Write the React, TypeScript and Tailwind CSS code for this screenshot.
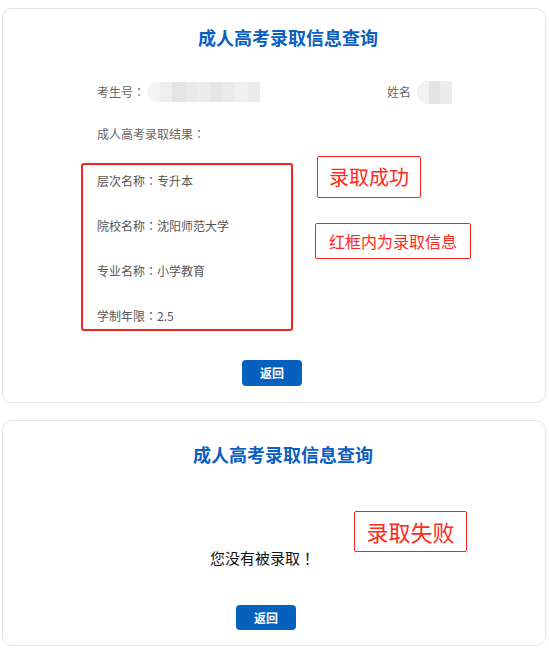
import React from "react";

const font = { fontFamily: '"Noto Sans CJK SC", "Noto Sans", sans-serif' };

// full-width colon sits centred in the JP cut, like the original page font
function Colon() {
  return <span style={{ fontFamily: '"Noto Sans CJK JP", sans-serif' }}>：</span>;
}

// mosaic blur used to hide personal info
function Mosaic({ shades, className }: { shades: string[]; className: string }) {
  return (
    <div className={`flex overflow-hidden rounded-l-full ${className}`}>
      {shades.map((c, i) => (
        <div key={i} className="h-full flex-1" style={{ backgroundColor: c }} />
      ))}
    </div>
  );
}

function BackButton({ className }: { className: string }) {
  return (
    <button
      className={`w-[60px] rounded-[4px] bg-[#0561bd] text-[12px] font-bold text-white ${className}`}
    >
      返回
    </button>
  );
}

export default function App() {
  const rows = [
    ["层次名称", "专升本"],
    ["院校名称", "沈阳师范大学"],
    ["专业名称", "小学教育"],
    ["学制年限", "2.5"],
  ];

  return (
    <div className="min-h-[652px] bg-white pt-[8px]" style={font}>
      {/* success card */}
      <div className="ml-[2px] w-[544px] rounded-[10px] border border-[#e4e4e4] bg-white pb-[16px]">
        <h1 className="mt-[15px] pl-[28px] text-center text-[18px] font-bold leading-[26px] text-[#0b5fc0]">
          成人高考录取信息查询
        </h1>

        <div className="mt-[32px] flex h-[20px] items-center text-[12px] text-[#666]">
          <span className="ml-[94px] w-[50px]">
            考生号<Colon />
          </span>
          <Mosaic
            className="h-[20px] w-[113px]"
            shades={["#f3f3f3", "#eeeeee", "#e4e4e4", "#e9e9e9", "#ececec", "#e6e6e6", "#eaeaea", "#f0f0f0", "#ebebeb"]}
          />
          <span className="ml-[127px] w-[30px]">姓名</span>
          <Mosaic className="h-[23px] w-[35px]" shades={["#f2f2f2", "#e3e3e3", "#ececec"]} />
        </div>

        <p className="ml-[94px] mt-[22px] text-[12px] leading-[20px] text-[#666]">
          成人高考录取结果<Colon />
        </p>

        <div className="mt-[12px] flex items-start">
          <div className="ml-[78px] mt-[7px] flex h-[168px] w-[212px] flex-col gap-[25px] rounded-[3px] border-2 border-[#f5231b] pl-[14px] pt-[6px]">
            {rows.map(([k, v]) => (
              <p key={k} className="text-[12px] leading-[20px] text-[#555]">
                {k}
                <Colon />
                {v}
              </p>
            ))}
          </div>

          <div className="ml-[22px] flex flex-col items-start gap-[25px]">
            <div className="ml-[2px] flex h-[42px] w-[104px] items-center justify-center rounded-[2px] border border-[#f5231b] text-[20px] text-[#ff2a1a]">
              录取成功
            </div>
            <div className="flex h-[36px] w-[156px] items-center justify-center rounded-[2px] border border-[#f5231b] text-[16px] text-[#ff2a1a]">
              红框内为录取信息
            </div>
          </div>
        </div>

        <BackButton className="ml-[239px] mt-[29px] h-[26px]" />
      </div>

      {/* failure card */}
      <div className="relative ml-[2px] mt-[17px] w-[544px] rounded-[10px] border border-[#e4e4e4] bg-white pb-[15px]">
        <h1 className="mt-[20px] pl-[18px] text-center text-[18px] font-bold leading-[26px] text-[#0b5fc0]">
          成人高考录取信息查询
        </h1>

        <p className="ml-[207px] mt-[80px] text-[15px] leading-[22px] text-[#111]">
          您没有被录取<span style={{ fontFamily: '"Noto Sans CJK JP", sans-serif' }}>！</span>
        </p>

        <div className="absolute left-[351px] top-[90px] flex h-[41px] w-[113px] items-center justify-center rounded-[2px] border border-[#f5231b] text-[22px] text-[#ff2a1a]">
          录取失败
        </div>

        <BackButton className="ml-[233px] mt-[36px] h-[25px]" />
      </div>
    </div>
  );
}
